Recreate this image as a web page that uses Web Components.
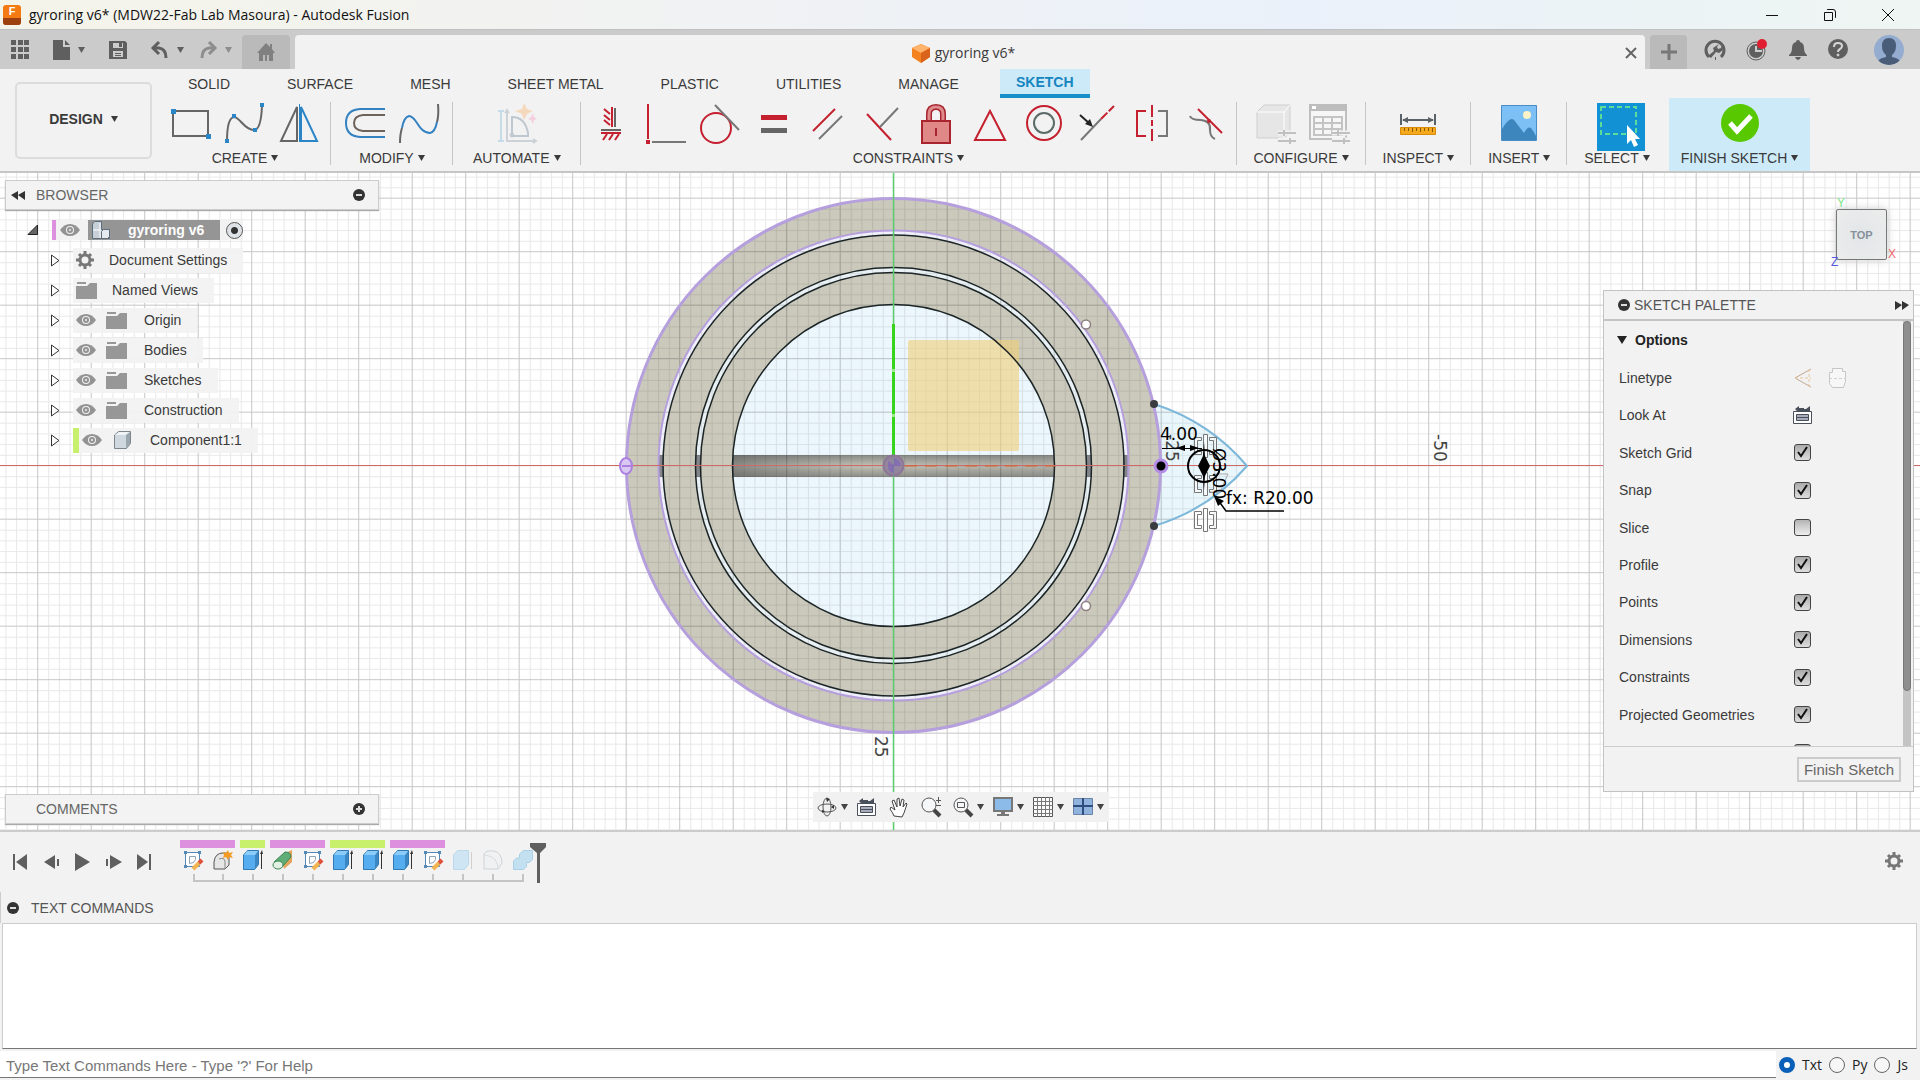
<!DOCTYPE html>
<html lang="en">
<head>
<meta charset="utf-8">
<title>gyroring v6* (MDW22-Fab Lab Masoura) - Autodesk Fusion</title>
<style>
  html, body { margin: 0; height: 100%; }
  body { font: 14px/20px "Liberation Sans", Arial, sans-serif; color: #3a3a3a; background: #f2f2f2; overflow: hidden; }
</style>
</head>
<body>
<fusion-app></fusion-app>

<script>
const BASE = `
  *, *::before, *::after { box-sizing: border-box; }
  button { font: inherit; color: inherit; background: none; border: 0; padding: 0; margin: 0; cursor: pointer; }
  svg { display: block; flex: none; }
`

// name: [width, height, markup]
const ICONS = {
  /* quick access */
  apps: [18, 19, '<path fill="#5f5f5f" d="M0 0h5v5H0zM7 0h5v5H7zM13 0h5v5h-5zM0 7h5v5H0zM7 7h5v5H7zM13 7h5v5h-5zM0 14h5v5H0zM7 14h5v5H7zM13 14h5v5h-5z"/>'],
  file: [17, 20, '<path fill="#5f5f5f" d="M0 0h10v7h7v13H0zM12 0l5 5h-5z"/>'],
  save: [18, 18, '<path fill="#5f5f5f" d="M0 0h16l2 2v16H0z"/><path fill="#ccc" d="M4 2h10v5H4zM4 10h10v6H4z"/><path fill="#5f5f5f" d="M10 2h3v4h-3zM6 12h6v1H6zM6 14h6v1H6z"/>'],
  undo: [18, 18, '<path fill="none" stroke="#5f5f5f" stroke-width="3" d="M3 7h5q7 1 7 10"/><path fill="none" stroke="#5f5f5f" stroke-width="3" d="M8 1L2 7l6 6"/>'],
  redo: [18, 18, '<path fill="none" stroke="#8d8d8d" stroke-width="3" d="M15 7h-5Q3 8 3 17"/><path fill="none" stroke="#8d8d8d" stroke-width="3" d="M10 1l6 6-6 6"/>'],
  home: [18, 18, '<path fill="#808080" d="M9 0l4 4V1h2v5l3 4h-2v8h-4v-6h-2v6H8v-6H6v6H2v-8H0z"/>'],
  down: [7, 6, '<path fill="currentColor" d="M0 0h7L3.500 6z"/>'],
  options: [10, 8, '<path fill="#222" d="M0 0h10L5 8z"/>'],
  cube: [18, 19, '<path fill="#f58220" d="M9 0l9 4v9l-9 6-9-6V4z"/><path fill="#ffb36b" d="M9 0l9 4-9 5-9-5z"/><path fill="#d9631a" d="M9 9v10l9-6V4z"/>'],
  close: [12, 12, '<path stroke="#666" stroke-width="2" d="M1 1l10 10M11 1L1 11"/>'],
  plus: [16, 16, '<path stroke="#777" stroke-width="3" d="M8 0v16M0 8h16"/>'],
  extension: [20, 20, '<path fill="none" stroke="#5f5f5f" stroke-width="3" d="M4 17A9 9 0 1 1 16 17M10 18.500h1"/><path fill="#5f5f5f" d="M14 4l-2 3 1 2 3-1 1-3 1 5-4 3-3-1-5 6-3-2 6-5-1-3z"/>'],
  jobs: [22, 22, '<circle cx="10" cy="12" r="9" fill="none" stroke="#5f5f5f" stroke-width="1"/><circle cx="10" cy="12" r="7" fill="#5f5f5f"/><path fill="none" stroke="#ccc" stroke-width="2" d="M10 7v5h6"/><circle cx="16" cy="5" r="5" fill="#e02030"/>'],
  bell: [18, 20, '<path fill="#5f5f5f" d="M9 0q2 0 2 2 4 1 4 6 0 5 3 7v1H0v-1q3-2 3-7 0-5 4-6 0-2 2-2zM6 17h6q-1 3-3 3t-3-3z"/>'],
  help: [21, 21, '<circle cx="10" cy="10" r="10" fill="#5f5f5f"/><path fill="none" stroke="#d6d6d6" stroke-width="2" d="M6 8q0-4 4-4t4 3q0 2-2 3t-2 3"/><circle cx="10" cy="16" r="1" fill="#d6d6d6" stroke="#d6d6d6"/>'],
  avatar: [30, 30, '<clipPath id="c"><circle cx="15" cy="15" r="15"/></clipPath><g clip-path="url(#c)"><path fill="#93acd0" d="M0 0h30v30H0z"/><path fill="#4a5d78" d="M15 3q7 0 7 8 0 6-4 9v2q6 1 8 4v4H4v-4q2-3 8-4v-2q-4-3-4-9 0-8 7-8z"/></g>'],
  min: [12, 12, '<path stroke="#111" d="M0 6.500h12"/>'],
  restore: [12, 12, '<path fill="none" stroke="#111" d="M.5 3.500h8v8h-8zM3 1q0-.5 1-.5h5q2.500 0 2.500 2.500v5q0 1-.5 1"/>'],
  winclose: [12, 12, '<path stroke="#111" d="M0 0l12 12M12 0L0 12"/>'],
  /* ribbon, 40x40 */
  rect: [40, 40, '<path fill="none" stroke="#666" stroke-width="2" d="M2 8h35v25H2z"/><path fill="#2b86c8" d="M0 6h5v5H0zM35 31h5v5h-5z"/>'],
  spline: [40, 40, '<path fill="none" stroke="#666" stroke-width="2" d="M2 38Q2 15 9 14c6 0 10 13 20 13q7 0 8-24"/><path fill="#2b86c8" d="M0 36h4v4H0zM7 11h4v4H7zM28 25h4v4h-4zM35 0h4v4h-4z"/>'],
  mirror: [40, 40, '<path fill="none" stroke="#666" stroke-width="2" d="M18 4v34H2z"/><path fill="none" stroke="#2b86c8" stroke-width="2" d="M22 4v34h16z"/><path stroke="#2b86c8" d="M20.500 1v38"/>'],
  offset: [40, 40, '<path fill="none" stroke="#3482c2" stroke-width="2" d="M40 6H15Q1 7 1 20t14 14h25"/><path fill="none" stroke="#6d625c" stroke-width="2" d="M40 12H18q-9 1-9 8t9 8h22"/>'],
  blend: [40, 40, '<path fill="none" stroke="#3482c2" stroke-width="2" d="M3 25Q5 14 10 13c8 0 9 17 21 17q5-1 7-11"/><path fill="none" stroke="#666" stroke-width="2" d="M1 40q0-9 2-15M38 19q2-7 1-18"/>'],
  automate: [40, 40, '<path fill="none" stroke="#c5dbe8" stroke-width="2" d="M4 8v30M1 8h6M1 38h6"/><path fill="none" stroke="#ccd3d8" stroke-width="2" d="M10 8v30h28M8 10l2-3 2 3M36 36l3 2-3 2"/><path fill="none" stroke="#bfc8d0" stroke-width="2" d="M15 14v19h16V30Q28 14 15 14z"/><circle cx="15" cy="32" r="2" fill="none" stroke="#bfc8d0"/><path fill="#f5d9bd" d="M27 0l3 6 6 2-6 3-3 6-2-6-7-3 7-2z"/><path fill="#f4cfe0" d="M36 10l1 4 3 2-3 1-1 4-2-4-3-1 3-2z"/>'],
  horiz: [40, 40, '<path fill="none" stroke="#c4202f" stroke-width="2" d="M20 4v20M12 6l6 5M12 12l6 5M12 17l6 5M11 37l4-6M17 37l4-6M23 37l4-6M9 30h20"/><path stroke="#666" stroke-width="2" d="M23 5v19M9 27h20"/>'],
  coincident: [40, 40, '<path stroke="#c4202f" stroke-width="2" d="M2 1v35"/><path stroke="#777" stroke-width="2" d="M6 39h34"/><path fill="#c4202f" d="M0 37h4v4H0z"/>'],
  tangent: [40, 40, '<circle cx="16" cy="25" r="15" fill="none" stroke="#c4202f" stroke-width="2"/><path stroke="#777" stroke-width="2" d="M15 2l24 25"/>'],
  equal: [40, 40, '<path fill="#c4202f" d="M7 12h26v5H7z"/><path fill="#666" d="M7 25h26v5H7z"/>'],
  parallel: [40, 40, '<path stroke="#c4202f" stroke-width="2" d="M5 28L27 6"/><path stroke="#777" stroke-width="2" d="M11 36l23-23"/>'],
  perp: [40, 40, '<path stroke="#c4202f" stroke-width="2" d="M5 11l24 26"/><path stroke="#777" stroke-width="2" d="M18 24L36 5"/>'],
  lock: [40, 40, '<path fill="none" stroke="#a8252f" stroke-width="6" d="M13 18V11q0-7 7-7t7 7v7"/><path fill="none" stroke="#df8b8b" stroke-width="3" d="M13 18V11q0-7 7-7t7 7v7"/><path fill="#e08787" stroke="#a8252f" stroke-width="2" d="M6 18h28v22H6z"/><path stroke="#a8252f" stroke-width="2" d="M20 25v8"/>'],
  triangle: [40, 40, '<path fill="none" stroke="#c4202f" stroke-width="2" d="M20 8l15 29H5z"/>'],
  concentric: [40, 40, '<circle cx="20" cy="20" r="17" fill="none" stroke="#c4202f" stroke-width="2"/><circle cx="20" cy="20" r="10" fill="none" stroke="#5c6a68" stroke-width="2"/>'],
  midpoint: [40, 40, '<path stroke="#777" stroke-width="2" d="M3 37l20-21"/><path stroke="#c4202f" stroke-width="2" stroke-dasharray="9 2" d="M23 16L36 3"/><path stroke="#222" stroke-width="2" d="M2 12l10 9"/><path fill="#222" d="M15 24L7 21l5-5z"/>'],
  symmetry: [40, 40, '<path fill="none" stroke="#c4202f" stroke-width="2" d="M14 8H5v25h9"/><path stroke="#c4202f" stroke-width="2" stroke-dasharray="12 3 6 3" d="M20 2v36"/><path fill="none" stroke="#777" stroke-width="2" d="M26 8h9v25h-9"/>'],
  curvature: [40, 40, '<path stroke="#c4202f" stroke-width="2" d="M12 6l24 24"/><path fill="none" stroke="#777" stroke-width="2" d="M4 13q1 4 11 4 10 1 9 10 0 7 5 9"/><circle cx="23" cy="18" r="2" fill="#c4202f"/>'],
  config: [44, 40, '<path fill="#e6e6e6" stroke="#cfcfcf" d="M3 9l7-7h26v28l-6 5H3z"/><path fill="none" stroke="#fff" d="M3 9h27v26M30 9l6-7"/><path stroke="#f2f2f2" stroke-width="5" d="M24 30h18M24 37h18"/><path stroke="#c0c0c0" stroke-width="2" d="M24 30h18M30 27v6M24 38h18M36 35v6"/>'],
  table: [42, 40, '<path fill="#f6f6f6" stroke="#c0c0c0" stroke-width="2" d="M2 2h36v34H2z"/><path fill="#bdbdbd" d="M1 1h38v7H1z"/><path fill="#fff" d="M4 3h4v3H4z"/><path fill="none" stroke="#c4c4c4" stroke-width="2" d="M6 14h28v18H6zM6 20h28M6 26h28M15 14v18M24 14v18"/><path stroke="#f2f2f2" stroke-width="5" d="M24 30h18M24 37h18"/><path stroke="#c0c0c0" stroke-width="2" d="M24 30h18M30 27v6M24 38h18M36 35v6"/>'],
  inspect: [40, 40, '<path stroke="#5a6268" stroke-width="2" d="M3 11v11M37 11v11M5 17h30"/><path fill="#5a6268" d="M4 17l6-3v6zM36 17l-6-3v6z"/><path fill="#f5a91c" stroke="#d98c0c" d="M2.500 24.500h35v7h-35z"/><path stroke="#8a5a08" d="M6.500 25v3M10.500 25v3M14.500 25v4M18.500 25v3M22.500 25v4M26.500 25v3M30.500 25v3M34.500 25v4"/>'],
  insert: [38, 38, '<path fill="#7cc0f5" stroke="#4a8cc4" d="M1.500 1.500h35v35h-35z"/><circle cx="27" cy="11" r="4" fill="#fdf3c8"/><path fill="#3c86bd" d="M2 25q8-13 12-9l10 13q4-7 7-5 3 4 5 8v4H2z"/>'],
  select: [48, 48, '<path fill="#1292d4" d="M0 0h48v48H0z"/><path fill="none" stroke="#5ddc9a" stroke-dasharray="5 3" stroke-width="2" d="M4 4h35v27H4z"/><path fill="#fff" d="M30 22v19l4-4 3 7 4-2-3-6h5z"/>'],
  finish: [40, 40, '<circle cx="20" cy="20" r="19" fill="#58c800"/><path fill="none" stroke="#fff" stroke-width="5" d="M10 20l7 8 14-15"/>'],
  /* panels */
  rewind: [14, 9, '<path fill="#333" d="M7 0v9L0 4zM14 0v9L7 4z"/>'],
  forward: [14, 9, '<path fill="#333" d="M0 0v9l7-5zM7 0v9l7-5z"/>'],
  minus: [12, 12, '<circle cx="6" cy="6" r="6" fill="#333"/><path stroke="#ddd" stroke-width="2" d="M3 6h6"/>'],
  add: [12, 12, '<circle cx="6" cy="6" r="6" fill="#333"/><path stroke="#ddd" stroke-width="2" d="M3 6h6M6 3v6"/>'],
  opened: [10, 10, '<path fill="#666" stroke="#222" d="M9.500 0v9.500H0z"/>'],
  closed: [9, 13, '<path fill="#fff" stroke="#333" d="M.5 1v11L8 6.500z"/>'],
  eye: [20, 14, '<path fill="#939393" d="M0 7q4-6 10-6t10 6q-4 6-10 6T0 7z"/><circle cx="10" cy="7" r="4" fill="#f2f2f2"/><circle cx="10" cy="7" r="3" fill="#939393"/><circle cx="10" cy="7" r="1" fill="#f2f2f2"/>'],
  folder: [21, 17, '<path fill="#979797" d="M0 4h11l3-3h7v16H0zM1 0h9v2H1z"/>'],
  gear: [18, 18, '<circle cx="9" cy="9" r="5" fill="none" stroke="#777" stroke-width="3"/><path stroke="#777" stroke-width="3" d="M9 0v4M9 14v4M0 9h4M14 9h4M3 3l2 2M15 15l-2-2M3 15l2-2M15 3l-2 2"/>'],
  parts: [18, 18, '<path fill="#c7d0d8" stroke="#5b6d7a" d="M.5 3l2-2.500h7v8h8v9h-17z"/><path fill="none" stroke="#fff" d="M1 9h7v8M8 2v7M11 10v7"/><path fill="#e4eaf0" stroke="#5b6d7a" d="M9.500 10.500l2-2h6v7l-2 2h-6z"/>'],
  body: [17, 18, '<path fill="#cfd8de" stroke="#7d868c" d="M.5 4l4-3.500h12v12l-4 5H.5z"/><path fill="#eef2f4" d="M1 4l4-3h11l-4 3z"/><path fill="#9aa6ae" d="M12 4l4-3v12l-4 4z"/>'],
  lookat: [20, 18, '<path fill="#fff" stroke="#4a4f5c" d="M.5 5.500h18v12H.5z"/><path fill="#a9adbb" stroke="#4a4f5c" d="M3.500 8.500h12v6h-12z"/><path stroke="#4a4f5c" d="M4 11.500h11"/><path fill="#4a4f5c" d="M2 3l4-3v2h5v1h2l4-3v5H4z"/>'],
  construction: [19, 20, '<path fill="none" stroke="#c3a893" d="M18 1L2 10l16 9"/><path fill="none" stroke="#e8c79d" stroke-dasharray="3 2" d="M2 10h16M16 1v18"/>'],
  centerline: [19, 20, '<path fill="#f7f7f7" stroke="#c6c6c6" d="M4.500.5h10v3h3v10l-2 6h-11l-3-4v-11h3z"/><path stroke="#d0d0d0" stroke-dasharray="3 2" d="M1 10.500h17"/>'],
  /* navigation bar */
  orbit: [20, 20, '<g fill="none" stroke="#555"><ellipse cx="10" cy="11" rx="9" ry="4"/><ellipse cx="10" cy="10" rx="4" ry="9"/></g><path fill="#333" d="M9 1l4 1-3 3zM14 10l3-2v4zM5 13l3 1-3 2z"/>'],
  hand: [20, 20, '<path fill="#fff" stroke="#444" d="M5 19Q4 16 1 12l1-2 4 3-3-9 2-1 3 7V2l2-1 1 8 2-7 2 1-1 7 3-4 1 1-3 9-2 4z"/>'],
  zoom: [20, 20, '<circle cx="8" cy="8" r="7" fill="#f5f7f9" stroke="#555" stroke-width="1"/><path stroke="#444" stroke-width="4" d="M13 13l6 6"/><path stroke="#555" d="M17.500 0v6M15 3.500h5M15 8.500h5"/>'],
  zoomwin: [20, 20, '<circle cx="8" cy="8" r="7" fill="#f5f7f9" stroke="#555"/><path fill="none" stroke="#555" d="M4.500 5.500h7v5h-7z"/><path stroke="#444" stroke-width="4" d="M13 13l6 6"/>'],
  display: [20, 20, '<path fill="#8cbbe9" stroke="#777" stroke-width="2" d="M1 1h18v13H1z"/><path fill="#777" d="M8 14h4v3h4v2H4v-2h4z"/>'],
  gridicon: [20, 20, '<path fill="#fafafa" stroke="#555" d="M.5.5h19v19H.5z"/><path stroke="#777" d="M4.500 0v20M8.500 0v20M12.500 0v20M16.500 0v20M0 4.500h20M0 8.500h20M0 12.500h20M0 16.500h20"/>'],
  views: [20, 18, '<path fill="#8fb3dd" stroke="#6a84a8" d="M.5.5h19v16H.5z"/><path stroke="#2f4e80" stroke-width="2" d="M10 0v17M0 8h20"/>'],
  /* timeline */
  first: [16, 16, '<path fill="#5f5f5f" d="M0 0h2v16H0zM14 0v16L3 8z"/>'],
  prev: [16, 16, '<path fill="#5f5f5f" d="M11 1v14L0 8zM13 5h2v7h-2z"/>'],
  play: [16, 18, '<path fill="#5f5f5f" d="M0 0l15 9-15 9z"/>'],
  next: [16, 16, '<path fill="#5f5f5f" d="M4 1v14l12-7zM0 5h2v7H0z"/>'],
  last: [16, 16, '<path fill="#5f5f5f" d="M12 0h2v16h-2zM0 0v16l11-8z"/>'],
  sketch: [20, 20, '<path fill="#fff" stroke="#5489b8" d="M2.500 2.500h14v14h-14z"/><path fill="none" stroke="#8fa4b5" d="M6.500 6.500h6v3q-1 4-6 4z"/><path fill="#5489b8" d="M1 1h3v3H1zM15 1h3v3h-3zM1 15h3v3H1z"/><path stroke="#f2b450" stroke-width="4" d="M10 19l6-6"/><path stroke="#e0503c" stroke-width="4" d="M16 13l3-3"/>'],
  component: [20, 20, '<path fill="#e6e6e6" stroke="#555" stroke-width="1" d="M1 19V12q1-9 9-9h6v12l-4 4z"/><path fill="none" stroke="#888" d="M12 19v-8q-1-4-6-2"/><path fill="#f59b23" d="M15 0l1 3 4-1-2 3 2 3-4-1-1 3-2-3-3 1 1-3-1-3 3 1z"/>'],
  extrude: [20, 20, '<path fill="#55acee" stroke="#2f79b4" d="M.5 5l4-4.500h11v14l-4 5H.5z"/><path fill="#3a87c4" d="M12 5l3-4v14l-3 4z"/><path fill="#8ccbf7" d="M1 5l3-4h11l-3 4z"/><path stroke="#333" d="M18.500 2v17"/><path fill="#333" d="M17 4l2-4 1 4z"/>'],
  revolve: [20, 20, '<path fill="#e0a45c" d="M8 5l11-5v12l-8 7z"/><path fill="#5fae78" stroke="#3c8553" d="M1 12L12 2q6 0 6 5L8 18z"/><ellipse cx="5" cy="15" rx="5" ry="4" fill="#e2f0e4" stroke="#3c8553"/>'],
  extrudeoff: [20, 20, '<path fill="#cfe5f3" stroke="#bcd8ea" d="M.5 5l4-4.500h11v14l-4 5H.5z"/><path stroke="#d0d0d0" d="M18.500 2v17"/>'],
  filletoff: [20, 20, '<path fill="#f0f1f2" stroke="#cfd3d6" d="M1 19V4l3-3h7q8 2 8 12l-4 6z"/><path fill="none" stroke="#d8dcde" d="M15 19Q15 6 1 5"/>'],
  combineoff: [20, 20, '<path fill="#c3e0f0" stroke="#a9d0e6" d="M.5 11l3-3h3V4l4-3.500h9v9l-3 3h-3v4l-3 3H.5z"/>'],
}

const icon = (name, extra = '') => {
  const [w, h, body] = ICONS[name]
  return `<svg width="${w}" height="${h}" viewBox="0 0 ${w} ${h}" overflow="visible" aria-hidden="true" ${extra}>${body}</svg>`
}

class Base extends HTMLElement {
  connectedCallback() {
    if (!this.shadowRoot) this.attachShadow({ mode: 'open' })
    this.shadowRoot.innerHTML = `<style>${BASE}${this.css()}</style>${this.html()}`
  }
}

class TitleBar extends Base {
  css() { return `
    :host { display: flex; align-items: center; height: 29px; padding: 0 26px 0 3px; color: #111;
      background: linear-gradient(90deg, #f5f4ea, #f0f2f4 40%, #eaf1fa 68%, #eef5f2); }
    .logo { display: flex; flex-direction: column; width: 18px; height: 20px; border-radius: 3px; overflow: hidden;
      background: #f47a14; color: #fff; font: bold 11px/13px "Liberation Sans", sans-serif; text-align: center; }
    .logo i { height: 7px; margin-top: auto; background: #9c4010; }
    h1 { flex: 1; margin: 0 0 0 8px; font: 14px/20px "Open Sans", "Segoe UI", sans-serif; }
    nav { display: flex; gap: 46px; }
  ` }
  html() { return `
    <span class="logo">F<i></i></span>
    <h1>gyroring v6* (MDW22-Fab Lab Masoura) - Autodesk Fusion</h1>
    <nav>
      <button aria-label="Minimize">${icon('min')}</button>
      <button aria-label="Restore">${icon('restore')}</button>
      <button aria-label="Close">${icon('winclose')}</button>
    </nav>
  ` }
}

class DocumentTabs extends Base {
  css() { return `
    :host { display: flex; align-items: stretch; height: 40px; padding-top: 5px; background: #cbcbcb; border-top: 1px solid #c0c0c0; }
    .quick { display: flex; align-items: center; gap: 24px; width: 242px; padding: 0 0 5px 11px; color: #5f5f5f; }
    .quick button { display: flex; align-items: center; gap: 8px; }
    .quick .off { color: #8d8d8d; margin-left: -9px; }
    .home, .new { display: grid; place-items: center; background: #bababa; border-radius: 4px 4px 0 0; }
    .home { width: 48px; margin-right: 5px; }
    .new { width: 37px; margin-left: 5px; }
    .doc { flex: 1; display: flex; align-items: center; gap: 5px; padding: 2px 8px 0 12px; background: #f2f2f2; border-radius: 4px 4px 0 0;
      font: 14px/20px "Open Sans", "Segoe UI", sans-serif; }
    .doc span { flex: 1; display: flex; align-items: center; justify-content: center; gap: 5px; }
    .right { display: flex; align-items: center; gap: 17px; padding: 0 16px 5px 14px; }
    .right :last-child { margin-left: 4px; }
  ` }
  html() { return `
    <div class="quick">
      <button aria-label="Data panel">${icon('apps')}</button>
      <button aria-label="File">${icon('file')}${icon('down')}</button>
      <button aria-label="Save">${icon('save')}</button>
      <button aria-label="Undo">${icon('undo')}${icon('down')}</button>
      <button class="off" aria-label="Redo">${icon('redo')}${icon('down')}</button>
    </div>
    <button class="home" aria-label="Home">${icon('home')}</button>
    <div class="doc"><span>${icon('cube')}gyroring v6*</span><button aria-label="Close document">${icon('close')}</button></div>
    <button class="new" aria-label="New design">${icon('plus')}</button>
    <div class="right">
      <button aria-label="Extensions">${icon('extension')}</button>
      <button aria-label="Job status">${icon('jobs')}</button>
      <button aria-label="Notifications">${icon('bell')}</button>
      <button aria-label="Help">${icon('help')}</button>
      <button aria-label="Account">${icon('avatar')}</button>
    </div>
  ` }
}

class RibbonGroup extends Base {
  css() { return `
    :host { display: flex; flex-direction: column; align-items: center; padding: 0 var(--pad, 17px); position: relative; }
    :host([line])::after { content: ""; position: absolute; right: 0; top: 4px; height: 63px; border-right: 1px solid #c6c6c6; }
    :host([primary]) { background: #cdeaf8; margin-left: 2px; }
    .tools { display: flex; align-items: center; gap: 14px; height: 50px; }
    .tools button { display: grid; place-items: center; width: 40px; height: 40px; }
    .caption { display: flex; align-items: center; gap: 4px; height: 20px; white-space: nowrap; }
  ` }
  html() {
    const names = this.getAttribute('icons').split(' ')
    return `
      <div class="tools">${names.map(n => `<button aria-label="${n}">${icon(n)}</button>`).join('')}</div>
      <button class="caption"><slot></slot>${icon('down')}</button>
    `
  }
}

class FusionRibbon extends Base {
  css() { return `
    :host { display: flex; align-items: flex-start; height: 104px; padding-left: 15px; background: #f2f2f2; border-bottom: 2px solid #c6c6c6; }
    .workspace { display: flex; align-items: center; justify-content: center; gap: 8px; width: 137px; height: 77px; margin: 13px 7px 0 0; padding-bottom: 3px;
      border: 2px solid #dcdcdc; border-radius: 5px; font-weight: bold; }
    .tabs { display: flex; height: 29px; }
    .tabs button { padding: 0 16px; margin: 0 12px 0 13px; height: 29px; line-height: 26px; }
    .tabs .on { background: #cdeaf8; color: #1585c0; font-weight: bold; border-bottom: 4px solid #1590c8; }
    .groups { display: flex; height: 73px; }
    .three { --pad: 12px; }
    .two { --pad: 14px; }
    .one { --pad: 20px; }
    .many { --pad: 11px; }
  ` }
  html() { return `
    <button class="workspace">DESIGN ${icon('down')}</button>
    <div>
      <div class="tabs" role="tablist">
        ${['SOLID', 'SURFACE', 'MESH', 'SHEET METAL', 'PLASTIC', 'UTILITIES', 'MANAGE'].map(t => `<button role="tab">${t}</button>`).join('')}
        <button role="tab" class="on" aria-selected="true">SKETCH</button>
      </div>
      <div class="groups">
        <ribbon-group class="three" line icons="rect spline mirror">CREATE</ribbon-group>
        <ribbon-group class="two" line icons="offset blend">MODIFY</ribbon-group>
        <ribbon-group class="one" line icons="automate">AUTOMATE</ribbon-group>
        <ribbon-group class="many" line icons="horiz coincident tangent equal parallel perp lock triangle concentric midpoint symmetry curvature">CONSTRAINTS</ribbon-group>
        <ribbon-group line icons="config table">CONFIGURE</ribbon-group>
        <ribbon-group line icons="inspect">INSPECT</ribbon-group>
        <ribbon-group line icons="insert">INSERT</ribbon-group>
        <ribbon-group icons="select">SELECT</ribbon-group>
        <ribbon-group class="three" primary icons="finish">FINISH SKETCH</ribbon-group>
      </div>
    </div>
  ` }
}

// Model view: rings centred on 893,466, 10.7px per millimetre
class SketchView extends Base {
  css() { return `
    :host { display: block; }
    svg { width: 100%; height: 100%; }
    text { font-family: "DejaVu Sans", sans-serif; font-size: 17px; }
  ` }
  html() {
    const symmetry = y => `<path fill="#fff" fill-opacity=".6" stroke="#777" stroke-width="1" d="M1203.500 ${y - 11.5}h4v23h-4zM1201.500 ${y - 8.5}h-7v17h7v-3h-4v-11h4zM1209.500 ${y - 8.5}h7v17h-7v-3h4v-11h-4z"/>`
    return `
    <svg viewBox="0 173 1920 657" preserveAspectRatio="xMidYMid slice">
      <defs>
        <pattern id="minor" x="893.500" y="465.500" width="10.700" height="10.700" patternUnits="userSpaceOnUse"><path fill="none" stroke="#000" stroke-opacity=".09" d="M0 .5h10.700M.5 0v10.700"/></pattern>
        <pattern id="major" x="893" y="465" width="53.500" height="53.500" patternUnits="userSpaceOnUse"><path fill="none" stroke="#000" stroke-opacity=".14" d="M0 .5h53.500M.5 0v53.500"/></pattern>
        <linearGradient id="bar" x2="0" y2="1"><stop stop-color="#888a86"/><stop offset=".5" stop-color="#c2c1b6"/><stop offset="1" stop-color="#8b8d88"/></linearGradient>
        <linearGradient id="side"><stop stop-color="#555" stop-opacity=".5"/><stop offset=".4" stop-color="#777" stop-opacity="0"/><stop offset="1" stop-color="#777" stop-opacity=".2"/></linearGradient>
      </defs>
      <path fill="#fff" d="M0 173h1920v657H0z"/>
      <circle cx="893.500" cy="465.500" r="267" fill="#cbc9bc"/>
      <circle cx="893.500" cy="465.500" r="235" fill="#f0f0fb"/>
      <circle cx="893.500" cy="465.500" r="230.500" fill="#cbc9bc"/>
      <circle cx="893.500" cy="465.500" r="198" fill="#e9f1f5"/>
      <circle cx="893.500" cy="465.500" r="193" fill="#cbc9bc"/>
      <circle cx="893.500" cy="465.500" r="161" fill="#ecf6fd"/>
      <path fill="#83858a" d="M659 455h5v22h-5zM1123 455h5v22h-5zM695 455h6v22h-6zM1086 455h6v22h-6z"/>
      <path fill="url(#bar)" d="M733 455h321v22H733z"/><path fill="url(#side)" d="M733 455h321v22H733z"/>
      <path fill="#e4f5fb" fill-opacity=".8" d="M1154 404Q1210 422 1247 466 1210 509 1154 526 1168 466 1154 404z"/>
      <path fill="url(#minor)" d="M0 173h1920v657H0z"/>
      <path fill="url(#major)" d="M0 173h1920v657H0z"/>
      <rect x="908" y="340" width="111" height="111" rx="2" fill="#f0cf77" fill-opacity=".6"/>
      <g fill="none" stroke="#1c2526" stroke-width="1.500">
        <circle cx="893.500" cy="465.500" r="230.500"/><circle cx="893.500" cy="465.500" r="198"/>
        <circle cx="893.500" cy="465.500" r="193"/><circle cx="893.500" cy="465.500" r="161"/>
      </g>
      <g fill="none" stroke="#b59fdc"><circle cx="893.500" cy="465.500" r="267" stroke-width="3"/><circle cx="893.500" cy="465.500" r="235" stroke-width="2"/></g>
      <path stroke="#cf6a68" stroke-width="1" d="M0 465.500h1920"/>
      <path stroke="#5ad06c" stroke-width="1.500" d="M893.500 173v657"/>
      <path stroke="#36d51c" stroke-width="3" d="M893.500 324v132"/><path stroke="#9beb8e" stroke-width="3" stroke-dasharray="3 42" d="M893.500 369v80"/>
      <path stroke="#d6622c" stroke-width="1" stroke-dasharray="12 8" d="M905 466h150"/>
      <circle cx="893.500" cy="465.500" r="10" fill="#8f7f9c" fill-opacity=".85" stroke="#8c7796" stroke-width="2"/><path fill="#6c4ed0" fill-opacity=".4" d="M888 461l6 4V458q7 2 7 8h-7v7q-6-1-6-7z"/>
      <ellipse cx="626" cy="466" rx="6" ry="8" fill="#d9c8f2" stroke="#ac7fe0" stroke-width="2"/><path stroke="#ac7fe0" stroke-width="2" d="M622 466h9"/>
      <g fill="#fff" stroke="#8f7f80" stroke-width="1.500"><circle cx="1086" cy="324.500" r="4.500"/><circle cx="1086" cy="606" r="4.500"/></g>
      <path fill="none" stroke="#7db8da" stroke-width="2" d="M1154 404Q1210 422 1247 466 1210 509 1154 526"/>
      <g fill="#3a3d3e"><circle cx="1154" cy="404" r="4"/><circle cx="1154" cy="526" r="4"/></g>
      <g fill="#444"><text transform="translate(1434 434) rotate(90)">-50</text><text transform="translate(1166 434) rotate(90)">-25</text><text transform="translate(875 736) rotate(90)">25</text></g>
      ${symmetry(446)}${symmetry(484)}${symmetry(520)}
      <path fill="none" stroke="#aaa" d="M1213 474h15l-8 18h-10"/>
      <circle cx="1161" cy="466" r="6" stroke="#b48be6" stroke-width="3"/>
      <path stroke="#000" stroke-width="1" d="M1162 448.500h40"/><path d="M1176 448l9-3v6zM1199 448l-9-3v6z"/>
      <circle cx="1204" cy="466" r="16" fill="none" stroke="#000" stroke-width="2"/>
      <path d="M1204 442l1 14 5 10-5 10-1 14-1-14-5-10 5-10z"/>
      <g fill="#000"><text x="1160" y="440">4.00</text><text x="1226" y="504">fx: R20.00</text><text transform="translate(1213 448) rotate(90)">Ø3.00</text></g>
      <path fill="none" stroke="#000" stroke-width="1.500" d="M1218 500l8 11h58"/><path d="M1214 496l10 5-6 5z"/>
    </svg>
  ` }
}

class PanelHeader extends Base {
  css() { return `
    :host { display: flex; align-items: center; height: 30px; padding: 0 13px 0 5px; background: #f3f3f3; border: 1px solid #ccc;
      box-shadow: 0 1px 1px #aaa; color: #666; }
    .lead { width: 25px; }
    span { flex: 1; }
  ` }
  html() {
    const lead = this.getAttribute('lead')
    return `<button class="lead" aria-label="Collapse">${lead ? icon(lead) : ''}</button><span><slot></slot></span><button aria-label="Toggle panel">${icon(this.getAttribute('toggle'))}</button>`
  }
}

class TreeRow extends Base {
  css() { return `
    :host { display: flex; align-items: center; height: 30px; }
    .arrow { width: 22px; }
    .item { display: flex; align-items: center; height: 25px; padding-right: 16px; background: rgba(242,242,242,.94); }
    .bar { width: 6px; height: 25px; background: #c9f06c; }
    .eye { margin: 0 10px 0 3px; }
    .glyph { display: flex; justify-content: center; min-width: 21px; margin-right: 17px; }
    .solo { min-width: 0; margin: 0 15px 0 3px; }
  ` }
  html() {
    const solo = this.hasAttribute('solo')
    return `
      <button class="arrow" aria-label="Expand">${icon('closed')}</button>
      <div class="item">
        ${this.hasAttribute('bar') ? '<i class="bar"></i>' : ''}
        ${solo ? '' : `<button class="eye" aria-label="Visibility">${icon('eye')}</button>`}
        <span class="glyph ${solo ? 'solo' : ''}">${icon(this.getAttribute('icon'))}</span>
        <slot></slot>
      </div>
    `
  }
}

class BrowserTree extends Base {
  css() { return `
    :host { display: block; width: 374px; }
    .root { display: flex; align-items: center; height: 30px; padding-left: 23px; margin-top: 5px; }
    .root .arrow { width: 24px; }
    .root .item { display: flex; align-items: center; height: 20px; background: #f2f2f2; }
    .bar { width: 4px; height: 20px; background: #dd90de; margin-right: 4px; }
    .name { display: flex; align-items: center; gap: 18px; height: 20px; margin: 0 6px 0 8px; padding: 0 16px 0 4px; background: #959595; color: #fff; font-weight: bold; }
    input { appearance: none; width: 17px; height: 17px; margin: 0; border: 1px solid #555; border-radius: 50%; background: radial-gradient(#333 3px, #dfe3e8 4px); }
    .rows { padding-left: 46px; }
  ` }
  html() { return `
    <panel-header lead="rewind" toggle="minus">BROWSER</panel-header>
    <div class="root">
      <button class="arrow" aria-label="Collapse">${icon('opened')}</button>
      <div class="item"><i class="bar"></i>${icon('eye')}<label class="name" for="active">${icon('parts')}gyroring v6</label><input type="radio" id="active" checked></div>
    </div>
    <div class="rows">
      <tree-row solo icon="gear">Document Settings</tree-row>
      <tree-row solo icon="folder">Named Views</tree-row>
      <tree-row icon="folder">Origin</tree-row>
      <tree-row icon="folder">Bodies</tree-row>
      <tree-row icon="folder">Sketches</tree-row>
      <tree-row icon="folder">Construction</tree-row>
      <tree-row bar icon="body">Component1:1</tree-row>
    </div>
  ` }
}

class ViewCube extends Base {
  css() { return `
    :host { display: block; width: 51px; }
    button { display: grid; place-items: center; width: 51px; height: 51px; border: 1px solid #777; border-radius: 2px; background: radial-gradient(#e2e6e8, #ececec); box-shadow: 0 0 8px #ccc;
      color: #84909a; font: bold 11px/16px "Liberation Sans", sans-serif; }
    span { position: absolute; font-size: 12px; line-height: 12px; }
    .x { right: -9px; bottom: 0; color: #ef6a72; }
    .y { left: 1px; top: -12px; color: #7be68b; }
    .z { left: -5px; bottom: -8px; color: #5757e0; }
  ` }
  html() { return `<button>TOP</button><span class="x">X</span><span class="y">Y</span><span class="z">Z</span>` }
}

class SketchPalette extends Base {
  css() { return `
    :host { display: block; width: 311px; background: #f2f2f2; border: 1px solid #c2c2c2; }
    header { display: flex; align-items: center; gap: 4px; height: 30px; padding: 0 4px 0 14px; border-bottom: 2px solid #c4c4c4; color: #555; }
    header span { flex: 1; }
    .scroll { display: flex; height: 426px; overflow: hidden; border-bottom: 1px solid #ccc; }
    .options { flex: 1; padding: 0 15px; }
    h2 { display: flex; align-items: center; gap: 8px; margin: 0 0 0 -2px; height: 38px; font-size: 14px; color: #222; }
    .list { display: grid; grid-auto-rows: 1fr; height: 412px; }
    .row { display: grid; grid-template-columns: 174px 1fr; align-items: center; }
    .row div { display: flex; gap: 16px; }
    input { appearance: none; width: 17px; height: 17px; margin: 0 0 0 1px; border: 1px solid #444; border-radius: 3px; background: linear-gradient(#b4b4b4, #eee); }
    input:checked { background: url("data:image/svg+xml,%3Csvg xmlns='http://www.w3.org/2000/svg' viewBox='0 0 15 15'%3E%3Cpath fill='none' stroke='%23111' stroke-width='2' d='M3 7l3 4 6-9'/%3E%3C/svg%3E"), linear-gradient(#aaa, #ddd); }
    .track { width: 8px; margin-right: 2px; background: #c4c4c4; }
    .thumb { height: 370px; border-radius: 4px; background: #8e8e8e; border: 1px solid #777; }
    footer { display: flex; justify-content: flex-end; padding: 10px 12px 9px; }
    footer button { height: 25px; padding: 0 5px; border: 2px solid #ccc; color: #666; font-size: 15px; line-height: 20px; }
  ` }
  html() {
    const checks = [['Sketch Grid', 1], ['Snap', 1], ['Slice', 0], ['Profile', 1], ['Points', 1], ['Dimensions', 1], ['Constraints', 1], ['Projected Geometries', 1], ['Construction Geometries', 1]]
    return `
      <header>${icon('minus')}<span>SKETCH PALETTE</span><button aria-label="Dock">${icon('forward')}</button></header>
      <div class="scroll">
        <div class="options">
          <h2>${icon('options')}Options</h2>
          <div class="list">
            <div class="row"><span>Linetype</span><div><button aria-label="Construction">${icon('construction')}</button><button aria-label="Centerline">${icon('centerline')}</button></div></div>
            <div class="row"><span>Look At</span><div><button aria-label="Look At">${icon('lookat')}</button></div></div>
            ${checks.map(([label, on], i) => `<div class="row"><label for="o${i}">${label}</label><input type="checkbox" id="o${i}" ${on ? 'checked' : ''}></div>`).join('')}
          </div>
        </div>
        <div class="track"><div class="thumb"></div></div>
      </div>
      <footer><button>Finish Sketch</button></footer>
    `
  }
}

class NavBar extends Base {
  css() { return `
    :host { display: flex; align-items: center; gap: 9px; width: 296px; height: 30px; padding: 0 4px; background: #f1f1f1; color: #444; }
    button { display: flex; align-items: center; gap: 4px; }
    .plain { padding-right: 3px; }
  ` }
  html() {
    const items = [['orbit', 1], ['lookat'], ['hand'], ['zoom'], ['zoomwin', 1], ['display', 1], ['gridicon', 1], ['views', 1]]
    return items.map(([n, menu]) => `<button class="${menu ? 'menu' : 'plain'}" aria-label="${n}">${icon(n)}${menu ? icon('down') : ''}</button>`).join('')
  }
}

class ModelCanvas extends Base {
  css() { return `
    :host { display: block; position: relative; flex: 1; min-height: 0; overflow: hidden; }
    sketch-view { position: absolute; inset: 0; }
    browser-tree { position: absolute; left: 5px; top: 7px; }
    .comments { position: absolute; left: 5px; bottom: 6px; width: 374px; }
    view-cube { position: absolute; right: 33px; top: 36px; }
    sketch-palette { position: absolute; right: 6px; top: 117px; }
    nav-bar { position: absolute; left: 50%; bottom: 8px; margin-left: -147px; }
  ` }
  html() { return `
    <sketch-view></sketch-view>
    <browser-tree></browser-tree>
    <panel-header class="comments" toggle="add">COMMENTS</panel-header>
    <view-cube></view-cube>
    <sketch-palette></sketch-palette>
    <nav-bar></nav-bar>
  ` }
}

class FusionTimeline extends Base {
  css() { return `
    :host { display: flex; align-items: flex-start; height: 62px; padding: 8px 17px 0 13px; background: #f2f2f2; border-top: 2px solid #ccc; }
    .play { display: flex; align-items: center; gap: 15px; height: 44px; width: 167px; }
    .steps { display: grid; grid-template-columns: repeat(12, 30px); }
    .mark { height: 8px; margin-right: 5px; }
    .pink { background: #dd90de; }
    .lime { background: #c9f06c; }
    .two { grid-column: span 2; }
    .step { padding: 0 0 2px 3px; height: 26px; grid-row: 2; }
    .rail { grid-row: 3; height: 8px; margin-right: -1px; border-bottom: 2px solid #c4c4c4; background: linear-gradient(#c4c4c4, #c4c4c4) 12px 0 / 2px 8px no-repeat; }
    .rail.start { margin-left: 13px; background-position: 0 0; }
    .rail.end { margin-right: 16px; }
    .head { margin: 3px 0 0 -10px; z-index: 1; }
    .gear { margin: 12px 0 0 auto; }
  ` }
  html() {
    const steps = ['sketch', 'component', 'extrude', 'revolve', 'sketch', 'extrude', 'extrude', 'extrude', 'sketch', 'extrudeoff', 'filletoff', 'combineoff']
    return `
      <div class="play">${['first', 'prev', 'play', 'next', 'last'].map(n => `<button aria-label="${n}">${icon(n)}</button>`).join('')}</div>
      <div class="steps">
        <i class="mark pink two"></i><i class="mark lime"></i><i class="mark pink two"></i><i class="mark lime two"></i><i class="mark pink two"></i>
        ${steps.map(n => `<button class="step" aria-label="${n}">${icon(n)}</button>`).join('')}
        ${steps.map((n, i) => `<i class="rail ${i ? i === 11 ? 'end' : '' : 'start'}"></i>`).join('')}
      </div>
      <svg class="head" width="16" height="40" aria-hidden="true"><path fill="#5f5f5f" d="M0 0h16v4l-6 6v30H7V10L0 4z"/></svg>
      <button class="gear" aria-label="Settings">${icon('gear')}</button>
    `
  }
}

class TextCommands extends Base {
  css() { return `
    :host { display: block; background: #f2f2f2; }
    header { display: flex; align-items: center; gap: 12px; height: 31px; padding-left: 6px; color: #555; border-left: 1px solid #ccc; }
    textarea { display: block; width: calc(100% - 5px); height: 126px; margin: 0 3px 0 2px; border: 1px solid #ccc; border-bottom: 1px solid #777; resize: none; background: #fff; outline: 0; }
    form { display: flex; align-items: center; height: 31px; margin: 0; }
    .line { flex: 1; height: 27px; padding: 2px 6px 0; border: 0; border-bottom: 1px solid #777; background: #fff; font: inherit; font-size: 15px; }
    .line::placeholder { color: #777; opacity: 1; }
    .modes { display: flex; align-items: center; gap: 7px; height: 27px; width: 144px; padding-left: 3px; font: 14px/20px "Open Sans", "Segoe UI", sans-serif; color: #222; }
    .modes input { appearance: none; flex: none; width: 16px; height: 16px; margin: 0; border: 1px solid #666; border-radius: 50%; background: #f7f7f7; }
    .modes input:checked { border: 5px solid #0a5fb8; background: #fff; }
  ` }
  html() { return `
    <header>${icon('minus')}TEXT COMMANDS</header>
    <textarea aria-label="Command output" readonly></textarea>
    <form>
      <input class="line" aria-label="Command" placeholder="Type Text Commands Here - Type '?' For Help">
      <div class="modes">
        <input type="radio" name="m" id="txt" checked><label for="txt">Txt</label>
        <input type="radio" name="m" id="py"><label for="py">Py</label>
        <input type="radio" name="m" id="js"><label for="js">Js</label>
      </div>
    </form>
  ` }
}

class FusionApp extends Base {
  css() { return `
    :host { display: flex; flex-direction: column; height: 100vh; }
  ` }
  html() { return `
    <title-bar></title-bar>
    <document-tabs></document-tabs>
    <fusion-ribbon></fusion-ribbon>
    <model-canvas></model-canvas>
    <fusion-timeline></fusion-timeline>
    <text-commands></text-commands>
  ` }
}

customElements.define('title-bar', TitleBar)
customElements.define('document-tabs', DocumentTabs)
customElements.define('ribbon-group', RibbonGroup)
customElements.define('fusion-ribbon', FusionRibbon)
customElements.define('sketch-view', SketchView)
customElements.define('panel-header', PanelHeader)
customElements.define('tree-row', TreeRow)
customElements.define('browser-tree', BrowserTree)
customElements.define('view-cube', ViewCube)
customElements.define('sketch-palette', SketchPalette)
customElements.define('nav-bar', NavBar)
customElements.define('model-canvas', ModelCanvas)
customElements.define('fusion-timeline', FusionTimeline)
customElements.define('text-commands', TextCommands)
customElements.define('fusion-app', FusionApp)
</script>
</body>
</html>
